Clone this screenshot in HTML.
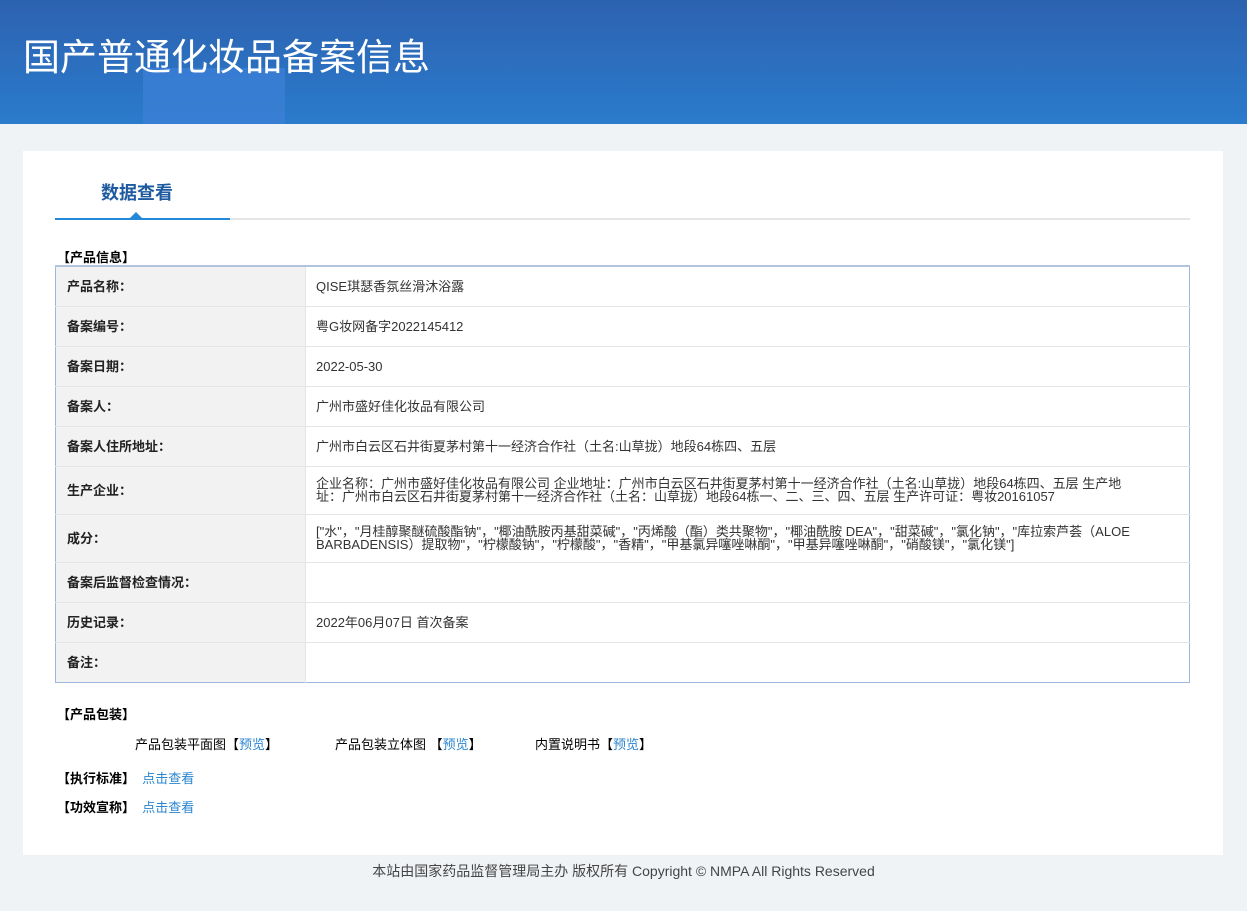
<!DOCTYPE html>
<html><head><meta charset="utf-8"><style>
*{margin:0;padding:0;box-sizing:border-box}
body{width:1247px;height:911px;background:#f0f3f6;font-family:"Liberation Sans","Noto Sans CJK SC",sans-serif;font-size:13px;color:#333;position:relative;overflow:hidden}
.hd{position:absolute;left:0;top:0;width:1247px;height:124px;background:linear-gradient(180deg,#2c62b0 0%,#2b7bcc 100%);overflow:hidden}
.hd h1{position:absolute;left:23px;top:27px;color:#fff;font-size:37px;font-weight:normal;letter-spacing:0;font-family:"Noto Sans CJK SC",sans-serif}
.blk{position:absolute;left:143px;top:68px;width:142px;height:56px;background:#3b7fd6;opacity:.8}
.main{position:absolute;left:23px;top:151px;width:1200px;height:704px;background:#fff}
.tab{position:absolute;left:78px;top:28px;font-size:18px;font-weight:bold;color:#1d5aa0;font-family:"Noto Sans CJK SC",sans-serif}
.line{position:absolute;left:32px;top:67px;width:1135px;height:2px;background:#e4e6e8}
.line b{position:absolute;left:0;top:0;width:175px;height:2px;background:#2488d8}
.tri{position:absolute;left:107px;top:61px;width:0;height:0;border-left:6px solid transparent;border-right:6px solid transparent;border-bottom:6px solid #2488d8}
.sec{position:absolute;font-weight:bold;color:#000;font-size:13px}
table{position:absolute;left:32px;top:114px;width:1135px;border-collapse:collapse;border:1px solid #9db8dd;border-top:2px solid #b0c4e0}
td{border-bottom:1px solid #e2e5e8;height:40px;vertical-align:middle;line-height:13px}
td.l{width:250px;background:#f2f2f2;font-weight:bold;padding-left:11px;color:#222;border-right:1px solid #e2e5e8}
td.r{padding-left:10px;padding-right:55px;color:#333}
a{color:#2a85d0;text-decoration:none}
.ft{position:absolute;top:861px;left:0;width:1247px;text-align:center;font-size:14px;color:#444}
</style></head><body>
<div class="hd"><div class="blk"></div><h1>国产普通化妆品备案信息</h1></div>
<div class="main">
<div class="tab">数据查看</div>
<div class="line"><b></b></div><div class="tri"></div>
<div class="sec" style="left:34px;top:96px">【产品信息】</div>
<table>
<tr><td class="l">产品名称：</td><td class="r">QISE琪瑟香氛丝滑沐浴露</td></tr>
<tr><td class="l">备案编号：</td><td class="r">粤G妆网备字2022145412</td></tr>
<tr><td class="l">备案日期：</td><td class="r">2022-05-30</td></tr>
<tr><td class="l">备案人：</td><td class="r">广州市盛好佳化妆品有限公司</td></tr>
<tr><td class="l">备案人住所地址：</td><td class="r">广州市白云区石井街夏茅村第十一经济合作社（土名:山草拢）地段64栋四、五层</td></tr>
<tr><td class="l" style="height:48px">生产企业：</td><td class="r">企业名称：广州市盛好佳化妆品有限公司 企业地址：广州市白云区石井街夏茅村第十一经济合作社（土名:山草拢）地段64栋四、五层 生产地址：广州市白云区石井街夏茅村第十一经济合作社（土名：山草拢）地段64栋一、二、三、四、五层 生产许可证：粤妆20161057</td></tr>
<tr><td class="l" style="height:48px">成分：</td><td class="r">["水"，"月桂醇聚醚硫酸酯钠"，"椰油酰胺丙基甜菜碱"，"丙烯酸（酯）类共聚物"，"椰油酰胺 DEA"，"甜菜碱"，"氯化钠"，"库拉索芦荟（ALOE BARBADENSIS）提取物"，"柠檬酸钠"，"柠檬酸"，"香精"，"甲基氯异噻唑啉酮"，"甲基异噻唑啉酮"，"硝酸镁"，"氯化镁"]</td></tr>
<tr><td class="l">备案后监督检查情况：</td><td class="r"></td></tr>
<tr><td class="l">历史记录：</td><td class="r">2022年06月07日 首次备案</td></tr>
<tr><td class="l" style="border-bottom:none">备注：</td><td class="r" style="border-bottom:none"></td></tr>
</table>
<div class="sec" style="left:34px;top:553px">【产品包装】</div>
<div style="position:absolute;left:112px;top:583px;color:#000">产品包装平面图【<a>预览</a>】</div>
<div style="position:absolute;left:312px;top:583px;color:#000">产品包装立体图 【<a>预览</a>】</div>
<div style="position:absolute;left:512px;top:583px;color:#000">内置说明书【<a>预览</a>】</div>
<div class="sec" style="left:34px;top:617px">【执行标准】 &nbsp;<a style="font-weight:normal">点击查看</a></div>
<div class="sec" style="left:34px;top:646px">【功效宣称】 &nbsp;<a style="font-weight:normal">点击查看</a></div>
</div>
<div class="ft">本站由国家药品监督管理局主办 版权所有 Copyright © NMPA All Rights Reserved</div>
</body></html>
